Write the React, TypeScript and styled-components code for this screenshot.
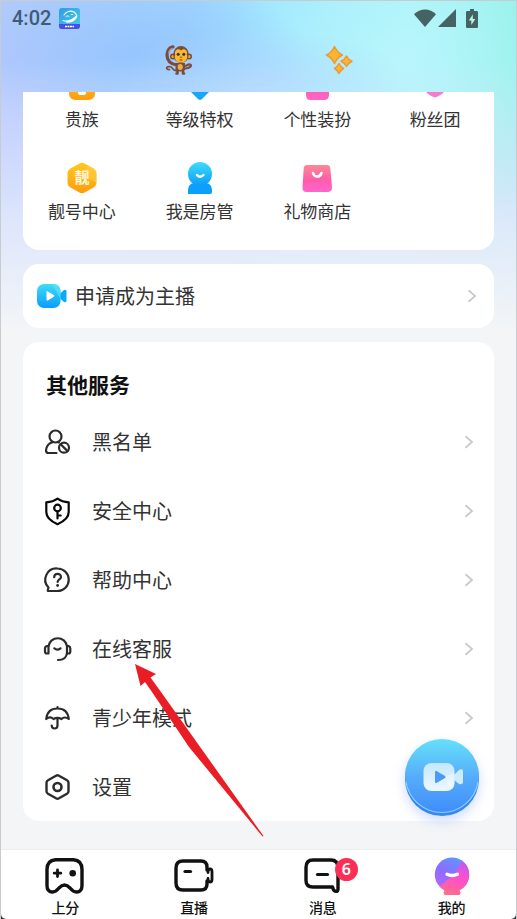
import React from 'react';
import styled, { createGlobalStyle } from 'styled-components';

const GlobalStyle = createGlobalStyle`
  *, *::before, *::after { box-sizing: border-box; }
  body {
    margin: 0;
    background: #f3f5f7;
    font-family: "Noto Sans CJK SC", "Noto Sans", sans-serif;
    color: #333;
  }
  a { color: inherit; text-decoration: none; }
  button { border: 0; padding: 0; background: none; font: inherit; color: inherit; cursor: pointer; }
  h2, ul { margin: 0; padding: 0; }
  ul { list-style: none; }
  svg { display: block; flex: none; overflow: visible; }
`;

const Screen = styled.div`
  position: relative;
  display: flex;
  flex-direction: column;
  min-height: 100vh;
  border: 1px solid #c9cccf;
  background:
    linear-gradient(180deg, rgba(243, 245, 247, 0) 200px, #f3f5f7 330px),
    linear-gradient(180deg, rgba(222, 230, 252, 0) 60px, rgba(222, 230, 252, 0.9) 210px),
    radial-gradient(ellipse 150px 60px at 50% 85px, rgba(178, 214, 255, 0.8), rgba(178, 214, 255, 0) 100%),
    radial-gradient(ellipse 170px 80px at 27% 55px, rgba(146, 194, 255, 0.8), rgba(146, 194, 255, 0) 100%),
    radial-gradient(ellipse 180px 150px at 78% 60px, rgba(186, 246, 252, 0.9), rgba(186, 246, 252, 0) 100%),
    radial-gradient(ellipse 170px 260px at 0% 150px, rgba(184, 198, 255, 1), rgba(184, 198, 255, 0) 100%),
    linear-gradient(90deg, #a9cdf8 0%, #9fd4fd 35%, #9fe8ff 55%, #a6f2f8 80%, #90f1e6 100%);
`;

const StatusBar = styled.div`
  display: flex;
  align-items: center;
  justify-content: space-between;
  height: 34px;
  padding: 0 38px 0 11px;
`;

const StatusGroup = styled.div<{ $gap: number }>`
  display: flex;
  align-items: center;
  gap: ${({ $gap }) => $gap}px;
`;

const Clock = styled.time`
  font: 500 20px/24px Roboto, sans-serif;
  color: #415a78;
`;

const ProfileHeader = styled.header`
  display: flex;
  align-items: flex-start;
  justify-content: center;
  gap: 132px;
  height: 57px;
  padding-top: 10px;
`;

const Content = styled.main`
  flex: 1;
  display: flex;
  flex-direction: column;
  gap: 14px;
  padding: 0 22px 28px;
`;

const Card = styled.section<{ $clipped?: boolean }>`
  background: #fff;
  border-radius: ${({ $clipped }) => ($clipped ? '0 0 16px 16px' : '16px')};
  overflow: hidden;
`;

const ShortcutGrid = styled.ul`
  display: grid;
  grid-template-columns: repeat(4, 1fr);
  row-gap: 31px;
  margin-top: -22px;
  padding-bottom: 27px;
`;

const Shortcut = styled.a`
  display: flex;
  flex-direction: column;
  align-items: center;
  gap: 5px;
  font-size: 17px;
  line-height: 24px;
`;

const ApplyRow = styled.a`
  display: flex;
  align-items: center;
  gap: 8px;
  height: 64px;
  padding: 0 17px 0 14px;
  font-size: 20px;
  line-height: 30px;
`;

const RowLabel = styled.span`
  flex: 1;
`;

const SectionTitle = styled.h2`
  padding: 26px 23px 7px;
  font-size: 21px;
  font-weight: 700;
  line-height: 32px;
  color: #111;
`;

const ServiceRow = styled.a`
  display: flex;
  align-items: center;
  gap: 20px;
  height: 69px;
  padding: 0 20px 0 21px;
  font-size: 20px;
  line-height: 30px;
`;

const NavShell = styled.div`
  background: #333;
`;

const TabBar = styled.nav`
  display: grid;
  grid-template-columns: repeat(4, 1fr);
  height: 70px;
  padding-top: 5px;
  border-top: 1px solid #ecedef;
  border-radius: 0 0 5px 5px;
  background: #fff;
`;

const Tab = styled.a`
  display: flex;
  flex-direction: column;
  align-items: center;
  font-size: 14px;
  font-weight: 500;
  line-height: 20px;
  color: #111;
`;

const TabIcon = styled.span`
  position: relative;
`;

const Badge = styled.span`
  position: absolute;
  top: 3px;
  left: 33px;
  width: 23px;
  height: 23px;
  border-radius: 50%;
  background: #fb2f56;
  color: #fff;
  font: 600 16px/23px "Noto Sans", sans-serif;
  text-align: center;
`;

const LiveButton = styled.button`
  position: absolute;
  right: 37px;
  bottom: 103px;
  width: 74px;
  height: 77px;
  border-radius: 50%;
  filter: drop-shadow(0 5px 6px rgba(100, 140, 255, 0.3));
`;

const Pointer = styled.svg`
  position: absolute;
  left: 134px;
  bottom: 82px;
  pointer-events: none;
`;

const Chevron = () => (
  <svg width="10" height="14" viewBox="0 0 10 14" fill="none" stroke="#c8cacc" strokeWidth="1.800" aria-hidden="true">
    <path d="M1.500 1.300 8 7l-6.500 5.700" />
  </svg>
);

const AppBadge = () => (
  <svg width="21" height="21" viewBox="0 0 21 21" aria-hidden="true">
    <defs>
      <linearGradient id="appBg" x1="0" y1="0" x2="1" y2="1">
        <stop offset="0" stopColor="#2f9bea" />
        <stop offset="1" stopColor="#42d2e4" />
      </linearGradient>
    </defs>
    <rect width="21" height="21" rx="3" fill="url(#appBg)" />
    <path d="M0 16h21v2a3 3 0 0 1-3 3H3a3 3 0 0 1-3-3z" fill="#4a4ee8" />
    <g fill="none" stroke="#fff" strokeLinecap="round">
      <path d="M5 7C7 3.500 11 2 15 4c3 2 3.500 5 .5 7" strokeWidth="1.100" />
      <path d="M4 12.500c5 1.500 10-.5 14-5-1.500 4.500-5 7-10.500 6.500" strokeWidth="1.200" />
      <path d="M7 8.500c1-.8 2-.8 3 0M12.500 6.500h1" strokeWidth="1" />
      <path d="M6 18.500h9" strokeWidth="1.400" strokeDasharray="2 .5" strokeLinecap="butt" />
    </g>
  </svg>
);

const Wifi = () => (
  <svg width="22" height="18" viewBox="0 0 22 18" fill="#466364" aria-hidden="true">
    <path d="M11 18 0 5.200C6-1.200 16-1.200 22 5.200z" />
  </svg>
);

const Signal = () => (
  <svg width="18" height="18" viewBox="0 0 18 18" fill="#466364" aria-hidden="true">
    <path d="M18 0v18H0z" />
  </svg>
);

const Battery = () => (
  <svg width="12" height="19" viewBox="0 0 12 19" aria-hidden="true">
    <path d="M4 0h4v2h2.500C11.500 2 12 2.500 12 3.500v14c0 1-.5 1.500-1.500 1.500h-9C.5 19 0 18.500 0 17.500v-14C0 2.500.5 2 1.500 2H4z" fill="#466364" />
    <path d="M6.800 5.500 2.800 11.500h2.500V16l4-6H6.800z" fill="#bdf4ec" />
  </svg>
);

const Monkey = () => (
  <svg width="28" height="30" viewBox="0 0 28 30" role="img" aria-label="猴子">
    <g fill="none" stroke="#7a4c3e" strokeLinecap="round" strokeLinejoin="round">
      <path d="M12 20C5 19 2 15 2 10 2.500 5 5 2 8 1.800" strokeWidth="3.200" />
      <path d="M12 25.500C8 27 8.500 22 4.500 21.500c-4 0-3.500 3.500 0 3" strokeWidth="1.700" />
      <path d="M18 21c3 1 4-2 7-1.500 2 .5 1 3.500-4.500 4" strokeWidth="2.200" />
      <path d="M12.500 23v5.500h-1M18 23v5.500h1" strokeWidth="2.600" />
    </g>
    <path d="M10.500 18h9.500v7q-4.500 3-9.500 0z" fill="#7a4c3e" />
    <ellipse cx="15.200" cy="22" rx="2.600" ry="3" fill="#eab240" />
    <circle cx="8" cy="11.500" r="3" fill="#7a4c3e" />
    <circle cx="24" cy="11.500" r="3" fill="#7a4c3e" />
    <circle cx="8" cy="11.500" r="1.500" fill="#f4ad32" />
    <circle cx="24" cy="11.500" r="1.500" fill="#f4ad32" />
    <ellipse cx="16" cy="9.500" rx="7.800" ry="8.500" fill="#7a4c3e" />
    <path d="M16 5.500c3.500-3 7 .5 5.800 4 1.700 4.500-1.800 8-5.800 8s-7.500-3.500-5.800-8C9 6 12.500 2.500 16 5.500z" fill="#fcb928" />
    <circle cx="13.200" cy="9.300" r="1.500" fill="#3b3029" />
    <circle cx="18.800" cy="9.300" r="1.500" fill="#3b3029" />
    <path d="M14.800 11.800h2.600L16 13z" fill="#5b3f33" />
    <ellipse cx="16" cy="15" rx="1.700" ry="1.300" fill="#e46a2c" />
    <path d="M3.500 8.500C4 5.500 5.500 4 7.500 3.300" stroke="#b193a5" strokeWidth="1.300" fill="none" />
  </svg>
);

const Sparkles = () => (
  <svg width="28" height="30" viewBox="0 0 28 30" fill="#fdb62b" stroke="#ee9838" strokeWidth="1.500" strokeLinejoin="round" role="img" aria-label="闪光">
    <path d="M9.500 1.500c1.800 4 4 6.500 8 8.500-4 2-6.200 4.500-8 8.500-1.800-4-4-6.500-8-8.500 4-2 6.200-4.500 8-8.500z" />
    <path d="M21.500 11c1.200 2.500 2.800 4 5.500 5.200-2.700 1.200-4.300 2.700-5.500 5.300-1.200-2.600-2.800-4.100-5.500-5.300 2.700-1.200 4.300-2.700 5.500-5.200z" />
    <path d="M14 18.500c1 2.200 2.300 3.700 4.500 5-2.200 1.200-3.500 2.700-4.500 5-1-2.300-2.300-3.800-4.500-5 2.200-1.300 3.500-2.800 4.500-5z" />
  </svg>
);

const Gradients = () => (
  <svg width="0" height="0" aria-hidden="true">
    <defs>
      <linearGradient id="gold" x1="0" y1="0" x2="0" y2="1">
        <stop offset="0" stopColor="#ffca1c" />
        <stop offset="1" stopColor="#ff9c0c" />
      </linearGradient>
      <linearGradient id="sky" x1="0" y1="0" x2="0" y2="1">
        <stop offset="0" stopColor="#3fdcf6" />
        <stop offset="1" stopColor="#0a9cff" />
      </linearGradient>
      <linearGradient id="pink" x1="0" y1="0" x2="0" y2="1">
        <stop offset="0" stopColor="#fb8a94" />
        <stop offset="0.550" stopColor="#ff5cab" />
        <stop offset="1" stopColor="#ff66cc" />
      </linearGradient>
      <linearGradient id="avatar" x1="0.700" y1="0" x2="0.200" y2="1">
        <stop offset="0" stopColor="#5f97ff" />
        <stop offset="0.500" stopColor="#8d6cff" />
        <stop offset="1" stopColor="#b765f8" />
      </linearGradient>
      <linearGradient id="avatarPink" x1="0.700" y1="0" x2="0.400" y2="1">
        <stop offset="0" stopColor="#c45af0" />
        <stop offset="0.500" stopColor="#ff4fcb" />
        <stop offset="1" stopColor="#ff6c8c" />
      </linearGradient>
      <linearGradient id="fab" x1="0" y1="0" x2="0" y2="1">
        <stop offset="0" stopColor="#65e0fb" />
        <stop offset="0.500" stopColor="#56aef9" />
        <stop offset="1" stopColor="#3f8cfb" />
      </linearGradient>
      <linearGradient id="glass" x1="0" y1="0" x2="0" y2="1">
        <stop offset="0" stopColor="#c3e7fd" />
        <stop offset="1" stopColor="#eef7ff" />
      </linearGradient>
    </defs>
  </svg>
);

const Icon32 = ({ children }: { children: React.ReactNode }) => (
  <svg width="32" height="32" viewBox="0 0 32 32" aria-hidden="true">{children}</svg>
);

const GoldGlyph = styled.text`
  font: 700 15px "Noto Sans CJK SC", sans-serif;
  fill: #fff6dc;
  text-anchor: middle;
`;

const shortcuts = [
  { label: '贵族', icon: <Icon32><path d="M3 4h26v19q0 7-7 7H10q-7 0-7-7z" fill="url(#gold)" /><path d="M12 14h8v9q0 2-2 2h-4q-2 0-2-2z" fill="#fff" /></Icon32> },
  { label: '等级特权', icon: <Icon32><path d="M16 2 29 18 18 29q-2 2-4 0L3 18z" fill="#18a6fd" /></Icon32> },
  { label: '个性装扮', icon: <Icon32><path d="M5 4h23v21q0 5-5 5H9q-4 0-4-5z" fill="url(#pink)" /></Icon32> },
  { label: '粉丝团', icon: <Icon32><path d="M16 27.500C8 25 3 19 3 11c0-7 9-8 13-2 4-6 13-5 13 2 0 8-5 14-13 16.500z" fill="#f87bcb" /></Icon32> },
  { label: '靓号中心', icon: <Icon32><path d="M13 1.700q3-1.700 6 0l9 5q2.500 1.500 2.500 4.500v9.600q0 3-2.500 4.500l-9 5q-3 1.700-6 0l-9-5q-2.500-1.500-2.500-4.500v-9.600q0-3 2.500-4.500z" fill="url(#gold)" /><path d="M22 3.500 28 6.700q2.500 1.500 2.500 4.500v9.600L17 15z" fill="#ffd45a" opacity=".45" /><GoldGlyph x="16" y="21">靓</GoldGlyph></Icon32> },
  { label: '我是房管', icon: <Icon32><path d="M4 32v-4q0-6 6-7h12q6 1 6 7v2q0 2-2 2z" fill="#0ba0fc" /><circle cx="16" cy="12" r="12" fill="url(#sky)" /><path d="M13 13q3 3.500 6.500 0" fill="none" stroke="#fff" strokeWidth="2.400" strokeLinecap="round" /></Icon32> },
  { label: '礼物商店', icon: <Icon32><path d="M6 3h20q3 0 3.300 3L31 25q.3 5-4.500 5h-21Q1 30 1.500 25L2.700 6Q3 3 6 3z" fill="url(#pink)" /><path d="M12 11q1 3.500 4.200 3.500t4.300-3.500" fill="none" stroke="#fff" strokeWidth="2.600" strokeLinecap="round" /></Icon32> },
];

const Line = ({ children, color = '#2b2b2b' }: { children: React.ReactNode; color?: string }) => (
  <svg width="28" height="28" viewBox="0 0 28 28" fill="none" stroke={color} strokeWidth="2.200" strokeLinecap="round" strokeLinejoin="round" aria-hidden="true">{children}</svg>
);

const services = [
  { label: '黑名单', icon: <Line><circle cx="11.500" cy="8.500" r="6" /><path d="M12.500 25H4.500q-2.500 0-2.500-2.500Q2.500 16 8.500 14.300M14 14.300l.8.200" /><circle cx="20" cy="19.700" r="5" /><path d="m16.700 16.300 6.800 6.800" /></Line> },
  { label: '安全中心', icon: <Line color="#080808"><path d="M13.500 1.700Q18 5 24.700 5.300V15c0 5.500-5 9.500-11.200 12.200C7.300 24.500 2.300 20.500 2.300 15V5.300Q9 5 13.500 1.700z" /><circle cx="13.500" cy="11" r="3.300" /><path d="M13.500 14.500v7M13.500 18.500h3.200" /></Line> },
  { label: '帮助中心', icon: <Line><path d="M13.500 2.500a11.200 11.200 0 1 1 0 22.500H4.500q-1 0-.7-1l.7-2.500A11.200 11.200 0 0 1 13.500 2.500z" /><path d="M10.200 11.200c0-4.500 6.800-4.300 6.800-.3 0 2.500-3.400 2.500-3.400 5" /><path d="M13.600 19.300v.2" strokeWidth="2.800" /></Line> },
  { label: '在线客服', icon: <Line><path d="M4.500 11v7.500H3Q1 18.500 1 16.500V13.500Q1 11.500 3 11zM23 11v7.500h1.500q1.800 0 1.800-2V13.500q0-2-1.800-2.500z" /><path d="M4.500 11a9.400 9.400 0 0 1 18.500 0M23 18c-.5 4.500-4 7-9 7" /><path d="M10.300 13.300q3 2.700 6.200 0" /></Line> },
  { label: '青少年模式', icon: <Line><path d="M2.200 15C3 8 7.500 4.500 13.500 4.500S24 8 24.800 15c-2.500-2-5.500-2-7.300 0-2.500-1.500-5.500-1.500-8 0-2-2-4.800-2-7.300 0zM13.500 3v1.500M13.500 14.500v7q0 3-3 3-2.600 0-2.800-3" /></Line> },
  { label: '设置', icon: <Line><path d="M12 2.700q1.500-.8 3 0l8 4.500q1.500.8 1.500 2.600v8.400q0 1.800-1.500 2.600l-8 4.500q-1.500.8-3 0l-8-4.500Q2.500 20 2.500 18.200V9.800q0-1.800 1.500-2.600z" strokeWidth="2.400" /><circle cx="13.500" cy="14" r="4" strokeWidth="2.600" /></Line> },
];

const CameraColour = () => (
  <svg width="30" height="24" viewBox="0 0 30 24" aria-hidden="true">
    <path d="M22 10.500 27 6q2.500-1 2.500 1.500v9Q29.500 19 27 18l-5-4.500z" fill="#0aaafb" />
    <rect width="23.500" height="24" rx="7" fill="url(#sky)" />
    <path d="M15 0h2q6.500 0 6.500 7v8z" fill="#58e8f5" opacity=".6" />
    <path d="M9.500 8.200q0-1.500 1.300-.8l6 3.700q1.200.8 0 1.600l-6 3.700q-1.300.7-1.300-.8z" fill="#fff" />
  </svg>
);

const NavIcon = ({ children }: { children: React.ReactNode }) => (
  <svg width="42" height="42" viewBox="0 0 42 42" fill="none" stroke="#111" strokeWidth="3.400" strokeLinecap="round" strokeLinejoin="round" aria-hidden="true">{children}</svg>
);

const tabs = [
  { label: '上分', icon: <NavIcon><path d="M11.500 4.800h18q8.500.7 8.500 9.700v16q0 6-5 6.500-3.500.3-7-4-5.500-6-11 0-3.500 4.300-7 4-5-.5-5-6.500v-16q0-9 8.500-9.700z" /><path d="M13.500 15v6.500M10.200 18.200h6.600" strokeWidth="2.800" /><circle cx="28.700" cy="18.200" r="3.300" fill="#111" stroke="none" /></NavIcon> },
  { label: '直播', icon: <NavIcon><path d="M34 15v-3q0-6-6-6H10q-7 0-7 7v15q0 7 7 7h18q6 0 6-6v-3" /><path d="M35 17.500q0-3.500 2-3.500t2 2.500v8q0 2.500-2 2.500t-2-3.500" strokeWidth="2.800" /><path d="M12 16.500h5.500" strokeWidth="3.200" /></NavIcon> },
  { label: '消息', badge: 6, icon: <NavIcon><path d="M11 5h18q7 0 7 8v21q0 3-2.800 2.200-1.700-.5-2.700-4.200H11Q4 32 4 25.500V12.500Q4 5 11 5z" /><path d="M15.500 19.500h10" strokeWidth="3.200" /></NavIcon> },
  { label: '我的', icon: <NavIcon><g stroke="none"><circle cx="21" cy="19.700" r="17.200" fill="url(#avatar)" /><path d="M31 5.700A17.200 17.200 0 0 1 29 35q-1 .8.500 2.200 0 2.800-2 2.800h-13q-2 0-2-2.500 1.500-1.500.5-2.500Q10 33 8.500 31.500L24 19z" fill="url(#avatarPink)" /></g><path d="M16 19.200q5 2.500 10.500 0" stroke="#fff" strokeWidth="3.400" /></NavIcon> },
];

export default function App() {
  return (
    <Screen>
      <GlobalStyle />
      <StatusBar>
        <StatusGroup $gap={8}>
          <Clock>4:02</Clock>
          <AppBadge />
        </StatusGroup>
        <StatusGroup $gap={2}>
          <Wifi />
          <StatusGroup $gap={10}>
            <Signal />
            <Battery />
          </StatusGroup>
        </StatusGroup>
      </StatusBar>
      <ProfileHeader>
        <Monkey />
        <Sparkles />
      </ProfileHeader>
      <Content>
        <Card $clipped>
          <ShortcutGrid>
            {shortcuts.map(({ label, icon }) => (
              <li key={label}>
                <Shortcut href="#shortcut">{icon}{label}</Shortcut>
              </li>
            ))}
          </ShortcutGrid>
        </Card>
        <Card>
          <ApplyRow href="#apply">
            <CameraColour />
            <RowLabel>申请成为主播</RowLabel>
            <Chevron />
          </ApplyRow>
        </Card>
        <Card>
          <SectionTitle>其他服务</SectionTitle>
          <ul>
            {services.map(({ label, icon }) => (
              <li key={label}>
                <ServiceRow href="#service">
                  {icon}
                  <RowLabel>{label}</RowLabel>
                  {label !== '设置' && <Chevron />}
                </ServiceRow>
              </li>
            ))}
          </ul>
        </Card>
      </Content>
      <NavShell>
        <TabBar>
          {tabs.map(({ label, icon, badge }) => (
            <Tab key={label} href="#tab">
              <TabIcon>
                {icon}
                {badge && <Badge>{badge}</Badge>}
              </TabIcon>
              {label}
            </Tab>
          ))}
        </TabBar>
      </NavShell>
      <LiveButton aria-label="开播">
        <svg width="74" height="77" viewBox="0 0 74 77" aria-hidden="true">
          <circle cx="37" cy="40" r="37" fill="#338af0" />
          <circle cx="37" cy="37" r="37" fill="url(#fab)" />
          <path d="M1 43a36.500 36.500 0 0 0 72 0" fill="none" stroke="#8fd0ff" strokeWidth="1.200" />
          <path d="M49 36 54 31q4-2 4 1v11q0 3-4 2l-5-4z" fill="#cdeafe" />
          <rect x="18.500" y="24" width="31" height="28" rx="8" fill="url(#glass)" />
          <path d="M49.500 34v10q0 5-3 6.500L38 38z" fill="#fff" opacity=".3" />
          <path d="M30 33.500q0-2.500 2-1.300l8 4.800q1.500 1 0 2l-8 4.800q-2 1.200-2-1.300z" fill="#4a9bf8" />
        </svg>
      </LiveButton>
      <Pointer width="128" height="173" viewBox="0 0 128 173" fill="#e91d25" aria-hidden="true">
        <path d="M0 0 21 10 15.500 13.500 26 28 63 80 128.500 172 127.500 172.500 54 83 17 28 10 18 5.500 22z" />
      </Pointer>
      <Gradients />
    </Screen>
  );
}
